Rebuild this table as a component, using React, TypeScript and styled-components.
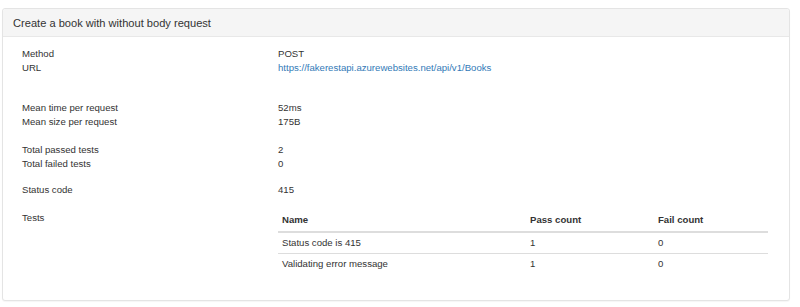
import React from 'react';
import styled, { createGlobalStyle } from 'styled-components';

const GlobalStyle = createGlobalStyle`
  body {
    margin: 0;
    background: #fff;
    font-family: 'Liberation Sans', Arial, sans-serif;
    color: #333;
  }
`;

const Page = styled.div`
  padding: 8px 10px 8px 2px;
`;

const Panel = styled.div`
  border: 1px solid #e4e4e4;
  border-radius: 3px;
  background: #fff;
  box-shadow: 0 1px 1px rgba(0, 0, 0, 0.04);
`;

const PanelHeading = styled.div`
  height: 27px;
  display: flex;
  align-items: center;
  padding: 0 10px;
  background: #f5f5f5;
  border-bottom: 1px solid #e8e8e8;
  border-radius: 3px 3px 0 0;
  font-size: 11.1px;
  color: #333;
`;

const PanelBody = styled.div`
  padding: 10px 21px 26px 19px;
  font-size: 9.6px;
  line-height: 14px;
`;

const Section = styled.div<{ $top?: number }>`
  display: grid;
  grid-template-columns: 256px 1fr;
  margin-top: ${(p) => p.$top ?? 0}px;
`;

const Label = styled.div`
  color: #333;
`;

const Value = styled.div`
  color: #333;
`;

const Link = styled.a`
  color: #337ab7;
  text-decoration: none;
`;

const Table = styled.table`
  width: 100%;
  border-collapse: collapse;
  font-size: 9.6px;
  margin-top: -1px;
`;

const Th = styled.th<{ $w?: string }>`
  text-align: left;
  font-weight: bold;
  padding: 5px 4px 6px;
  line-height: 10px;
  border-bottom: 2px solid #ddd;
  width: ${(p) => p.$w ?? 'auto'};
`;

const Td = styled.td`
  padding: 5px 4px 5px;
  line-height: 10px;
  border-top: 1px solid #ddd;
`;

const Tr = styled.tr`
  &:first-child td {
    border-top: none;
  }
`;

type Row = { label: string; value: React.ReactNode };

const groups: { top: number; rows: Row[] }[] = [
  {
    top: 0,
    rows: [
      { label: 'Method', value: 'POST' },
      {
        label: 'URL',
        value: (
          <Link href="#">https://fakerestapi.azurewebsites.net/api/v1/Books</Link>
        ),
      },
    ],
  },
  {
    top: 26,
    rows: [
      { label: 'Mean time per request', value: '52ms' },
      { label: 'Mean size per request', value: '175B' },
    ],
  },
  {
    top: 14,
    rows: [
      { label: 'Total passed tests', value: '2' },
      { label: 'Total failed tests', value: '0' },
    ],
  },
  {
    top: 12,
    rows: [{ label: 'Status code', value: '415' }],
  },
];

const tests = [
  { name: 'Status code is 415', pass: 1, fail: 0 },
  { name: 'Validating error message', pass: 1, fail: 0 },
];

const App: React.FC = () => {
  return (
    <>
      <GlobalStyle />
      <Page>
        <Panel>
          <PanelHeading>Create a book with without body request</PanelHeading>
          <PanelBody>
            {groups.map((g, i) => (
              <Section key={i} $top={g.top}>
                {g.rows.map((r) => (
                  <React.Fragment key={r.label}>
                    <Label>{r.label}</Label>
                    <Value>{r.value}</Value>
                  </React.Fragment>
                ))}
              </Section>
            ))}
            <Section $top={14}>
              <Label>Tests</Label>
              <Value>
                <Table>
                  <thead>
                    <tr>
                      <Th $w="240px">Name</Th>
                      <Th $w="120px">Pass count</Th>
                      <Th>Fail count</Th>
                    </tr>
                  </thead>
                  <tbody>
                    {tests.map((t) => (
                      <Tr key={t.name}>
                        <Td>{t.name}</Td>
                        <Td>{t.pass}</Td>
                        <Td>{t.fail}</Td>
                      </Tr>
                    ))}
                  </tbody>
                </Table>
              </Value>
            </Section>
          </PanelBody>
        </Panel>
      </Page>
    </>
  );
};

export default App;
